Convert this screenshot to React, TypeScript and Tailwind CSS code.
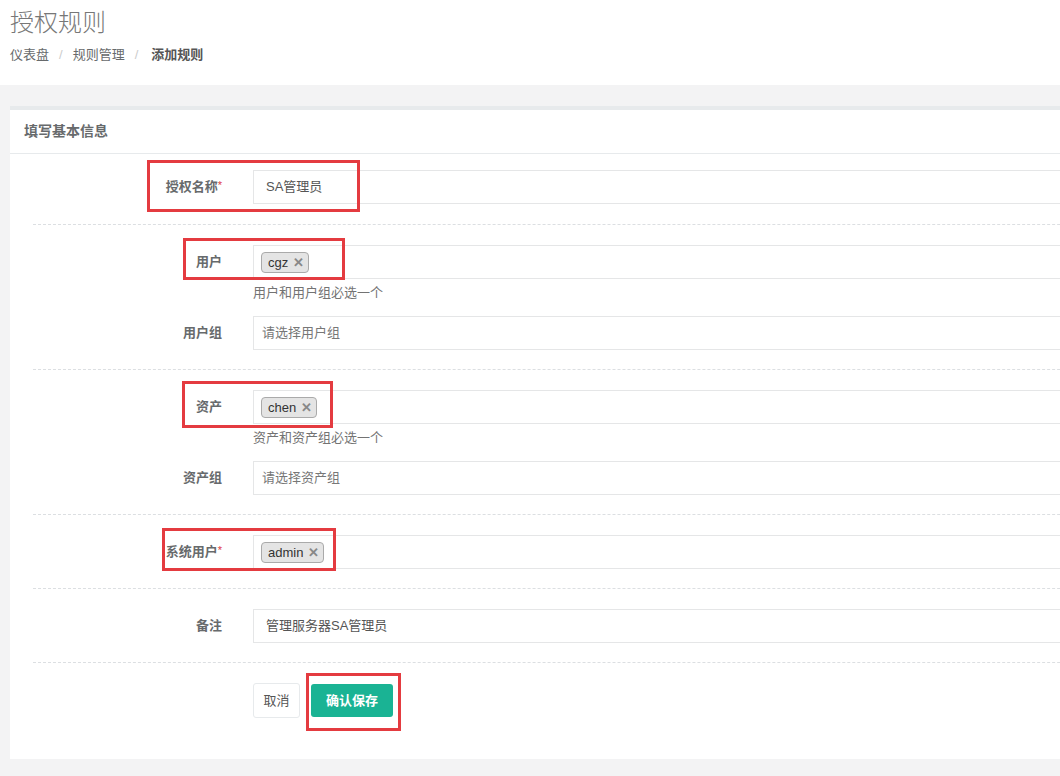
import React from "react";

const Dashed = () => (
  <div className="h-0 border-t border-dashed border-[#dcdfe2]" />
);

const Label = ({ text, req }: { text: string; req?: boolean }) => (
  <div className="w-[190px] h-[34px] flex items-center justify-end pr-[1px] text-[13px] font-bold text-[#676a6c] shrink-0">
    <span>{text}</span>
    {req && <span className="text-[#e0393e] font-normal text-[11px] self-start mt-[7px]">*</span>}
  </div>
);

const Chip = ({ text }: { text: string }) => (
  <div className="h-[21px] flex items-center gap-[5px] pl-[6px] pr-[4px] bg-[#e4e4e4] border border-[#aaaaaa] rounded-[4px] text-[13px] text-[#333]">
    <span className="leading-none">{text}</span>
    <span className="text-[#888] font-bold text-[13px] leading-none">✕</span>
  </div>
);

const TextInput = ({ value, placeholder, pl = "pl-[12px]" }: { value?: string; placeholder?: string; pl?: string }) => (
  <div className={`flex-1 h-[34px] border border-[#e5e6e7] bg-white flex items-center ${pl} text-[13px]`}>
    {value ? <span className="text-[#555]">{value}</span> : <span className="text-[#777]">{placeholder}</span>}
  </div>
);

const TagInput = ({ tag }: { tag: string }) => (
  <div className="flex-1 h-[34px] border border-[#e5e6e7] bg-white flex items-center pl-[7px]">
    <Chip text={tag} />
  </div>
);

const Row = ({ children }: { children: React.ReactNode }) => (
  <div className="flex gap-[30px]">{children}</div>
);

const Help = ({ text }: { text: string }) => (
  <div className="pl-[220px] mt-[5px] leading-[18px] text-[13px] text-[#737373]">{text}</div>
);

const RedBox = ({ c }: { c: string }) => (
  <div className={`absolute border-[3px] border-[#e43b40] pointer-events-none ${c}`} />
);

export default function App() {
  return (
    <div className="relative w-[1060px] h-[776px] overflow-hidden bg-[#f3f3f4] font-['Liberation_Sans','Noto_Sans_CJK_SC',sans-serif] text-[#676a6c]">
      {/* header */}
      <div className="h-[85px] bg-white px-[10px] pt-[9px]">
        <div className="text-[24px] leading-[28px] font-light text-[#777]">授权规则</div>
        <div className="mt-[9px] flex items-center text-[13px] leading-[18px] text-[#676a6c]">
          <span>仪表盘</span>
          <span className="mx-[10px] text-[#ccc]">/</span>
          <span>规则管理</span>
          <span className="ml-[10px] mr-[13px] text-[#ccc]">/</span>
          <span className="font-bold text-[#555]">添加规则</span>
        </div>
      </div>

      {/* card */}
      <div className="pt-[21px] pl-[10px]">
        <div className="w-[1200px] bg-white border-t-4 border-[#e7eaec]">
          <div className="h-[44px] border-b border-[#e7eaec] flex items-center pl-[14px] text-[14px] font-bold text-[#676a6c]">
            填写基本信息
          </div>
          <div className="pt-[16px] pb-[41px] pl-[23px]">
            <Row>
              <Label text="授权名称" req />
              <TextInput value="SA管理员" />
            </Row>
            <div className="mt-[20px] mb-[20px]"><Dashed /></div>
            <Row>
              <Label text="用户" />
              <TagInput tag="cgz" />
            </Row>
            <Help text="用户和用户组必选一个" />
            <div className="mt-[14px]">
              <Row>
                <Label text="用户组" />
                <TextInput placeholder="请选择用户组" pl="pl-[8px]" />
              </Row>
            </div>
            <div className="mt-[19px] mb-[20px]"><Dashed /></div>
            <Row>
              <Label text="资产" />
              <TagInput tag="chen" />
            </Row>
            <Help text="资产和资产组必选一个" />
            <div className="mt-[14px]">
              <Row>
                <Label text="资产组" />
                <TextInput placeholder="请选择资产组" pl="pl-[8px]" />
              </Row>
            </div>
            <div className="mt-[19px] mb-[20px]"><Dashed /></div>
            <Row>
              <Label text="系统用户" req />
              <TagInput tag="admin" />
            </Row>
            <div className="mt-[19px] mb-[20px]"><Dashed /></div>
            <Row>
              <Label text="备注" />
              <TextInput value="管理服务器SA管理员" />
            </Row>
            <div className="mt-[19px] mb-[20px]"><Dashed /></div>
            <div className="flex items-center pl-[220px] gap-[11px]">
              <button className="h-[35px] w-[47px] bg-white border border-[#e7eaec] rounded-[3px] text-[13px] text-[#555]">取消</button>
              <button className="h-[33px] w-[82px] bg-[#1ab394] rounded-[3px] text-[13px] font-bold text-white">确认保存</button>
            </div>
          </div>
        </div>
      </div>

      {/* annotation boxes */}
      <RedBox c="left-[147px] top-[160px] w-[213px] h-[52px]" />
      <RedBox c="left-[183px] top-[238px] w-[162px] h-[42px]" />
      <RedBox c="left-[182px] top-[381px] w-[151px] h-[47px]" />
      <RedBox c="left-[162px] top-[528px] w-[174px] h-[43px]" />
      <RedBox c="left-[306px] top-[673px] w-[95px] h-[58px]" />
    </div>
  );
}
